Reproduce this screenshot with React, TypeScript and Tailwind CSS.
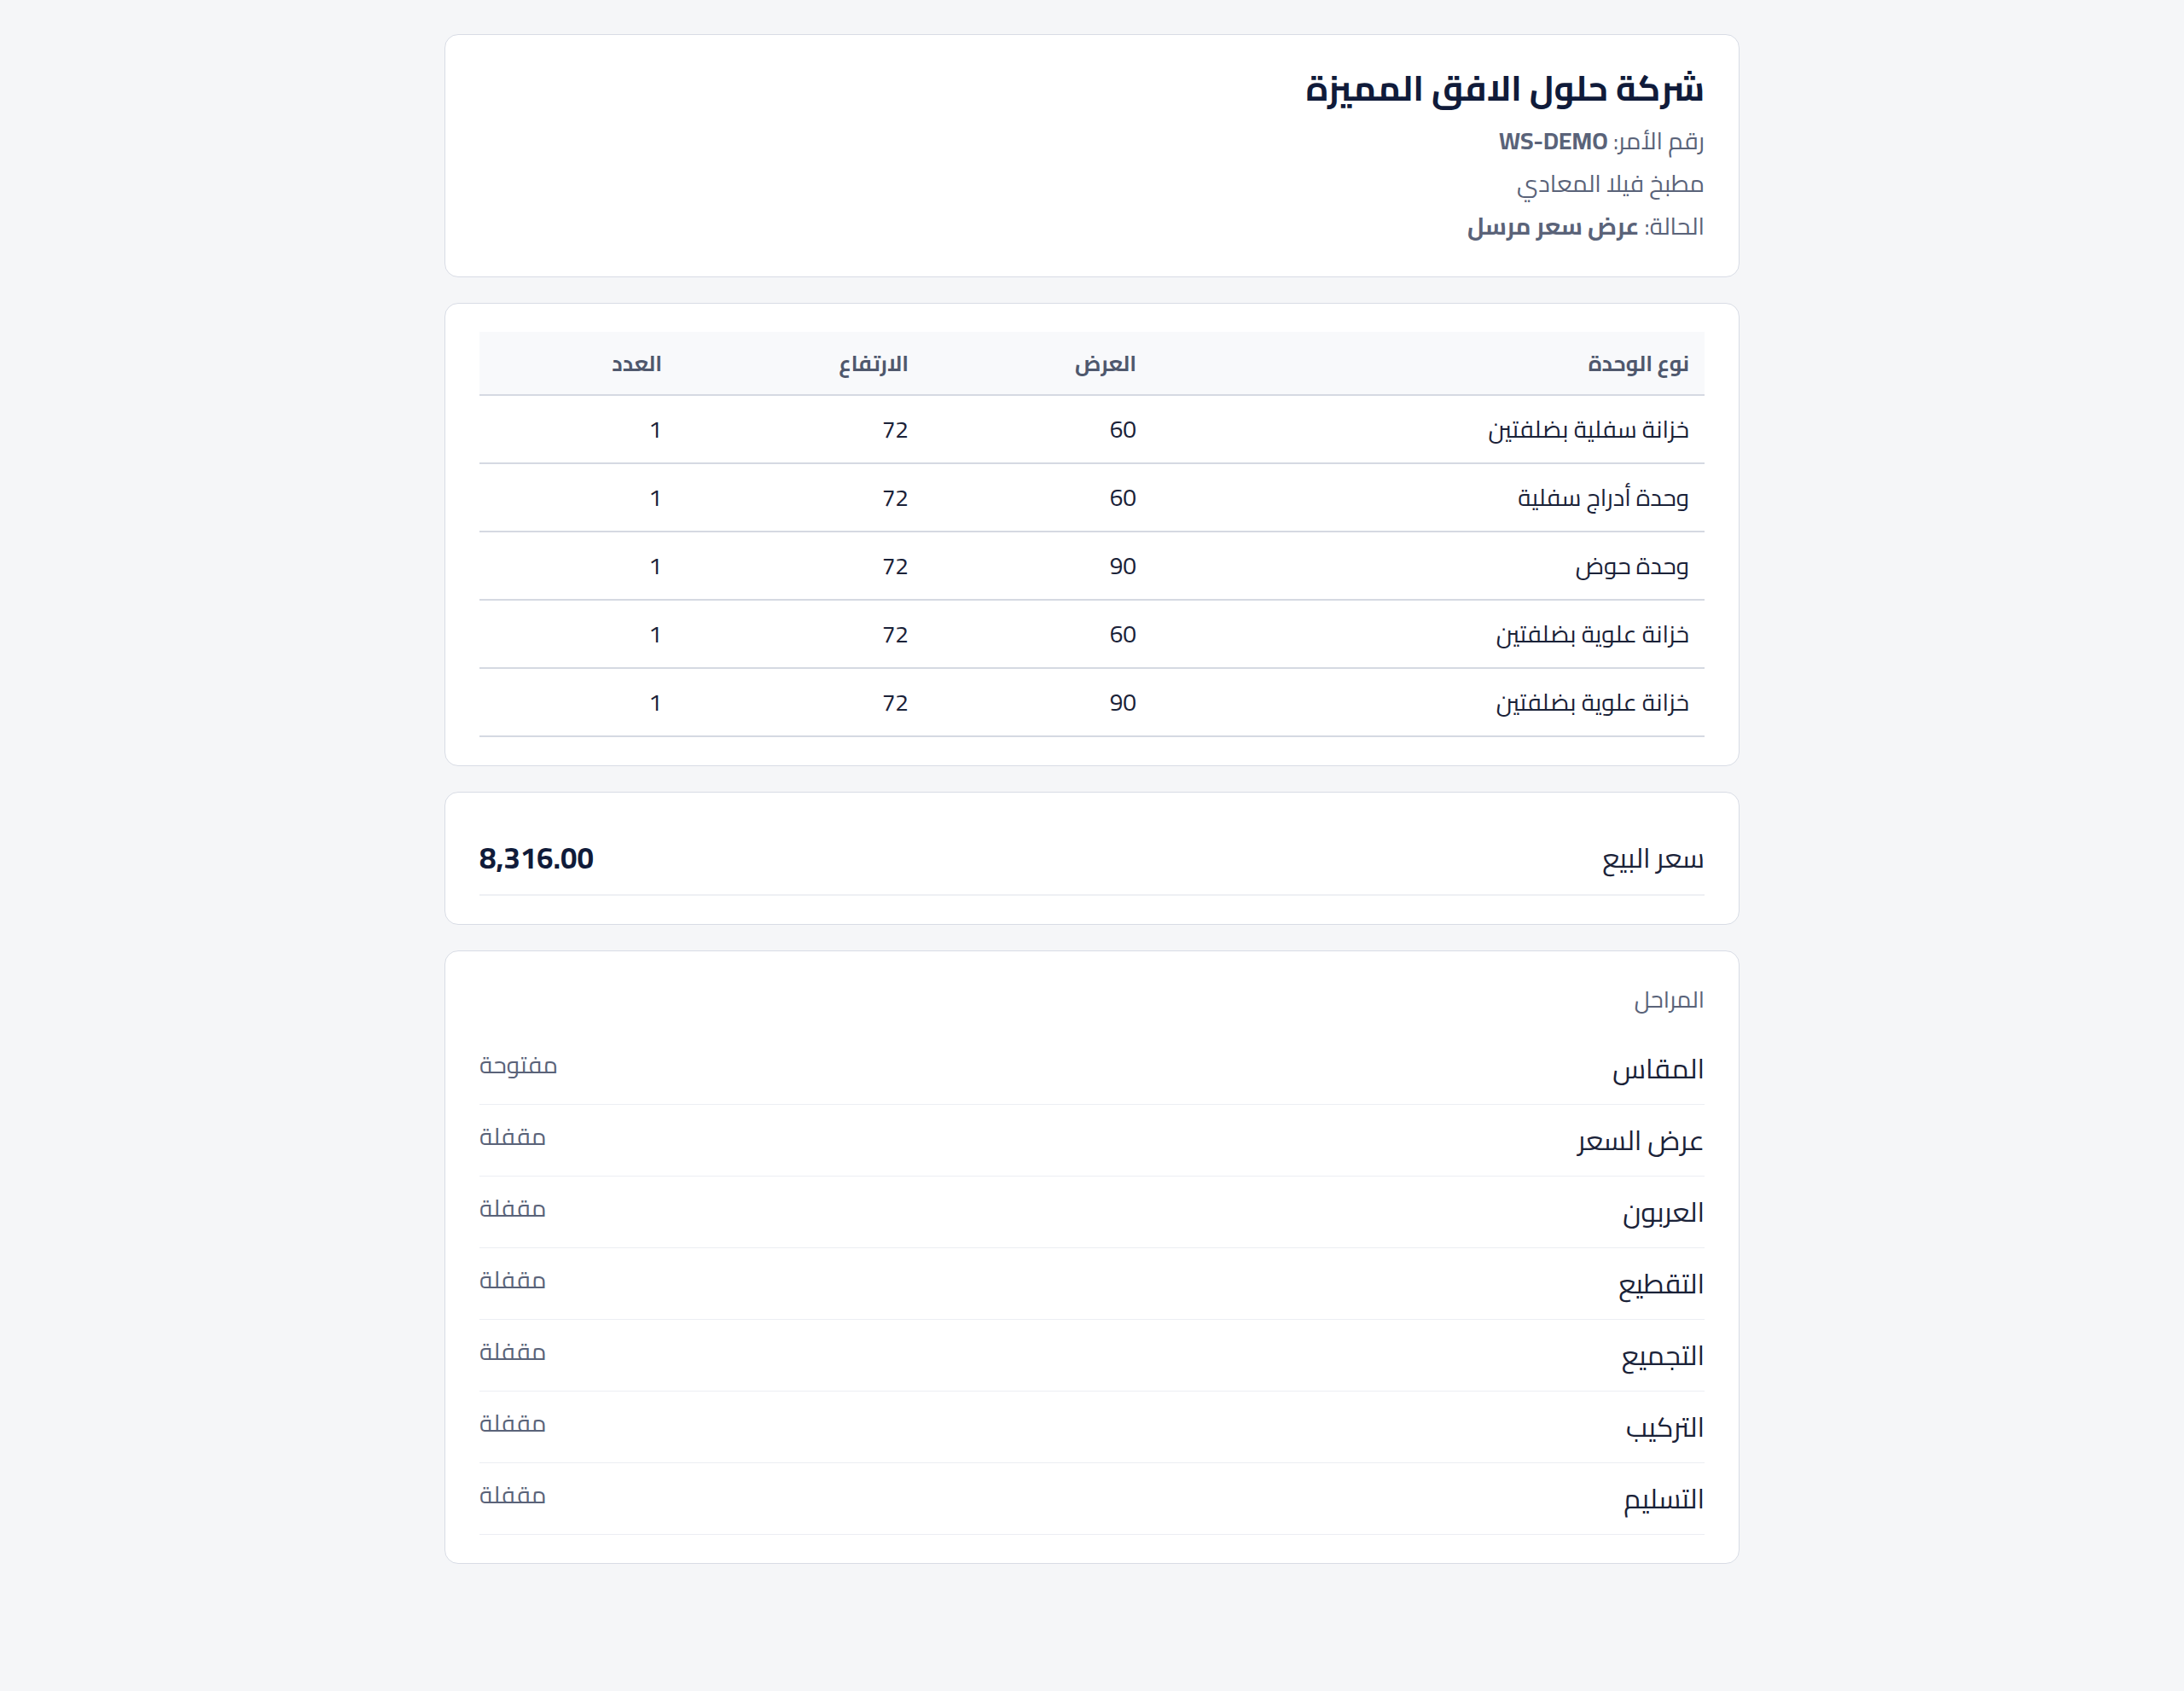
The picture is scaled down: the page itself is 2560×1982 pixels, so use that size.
import React from 'react';

const units = [
  { name: 'خزانة سفلية بضلفتين', width: 60, height: 72, qty: 1 },
  { name: 'وحدة أدراج سفلية', width: 60, height: 72, qty: 1 },
  { name: 'وحدة حوض', width: 90, height: 72, qty: 1 },
  { name: 'خزانة علوية بضلفتين', width: 60, height: 72, qty: 1 },
  { name: 'خزانة علوية بضلفتين', width: 90, height: 72, qty: 1 },
];

const stages = [
  { name: 'المقاس', status: 'مفتوحة' },
  { name: 'عرض السعر', status: 'مقفلة' },
  { name: 'العربون', status: 'مقفلة' },
  { name: 'التقطيع', status: 'مقفلة' },
  { name: 'التجميع', status: 'مقفلة' },
  { name: 'التركيب', status: 'مقفلة' },
  { name: 'التسليم', status: 'مقفلة' },
];

export default function App() {
  return (
    <div
      dir="rtl"
      className="min-h-screen bg-[#f5f6f8] pt-10 pb-10 text-[#1a2238]"
      style={{ fontFamily: "Cairo, 'Noto Sans Arabic', 'DejaVu Sans', sans-serif" }}
    >
      <div className="mx-auto flex w-[1518px] flex-col gap-[30px]">
        {/* Header */}
        <section className="rounded-2xl border border-[#d8dce5] bg-white px-10 pt-[33px] pb-[34px]">
          <h1 className="text-[41px] font-bold leading-[58px] text-[#101b3a]">شركة حلول الافق المميزة</h1>
          <div className="mt-[8px] text-[28px] leading-[50px] text-[#5a6379]">
            <p>
              رقم الأمر: <span className="font-bold">WS-DEMO</span>
            </p>
            <p>مطبخ فيلا المعادي</p>
            <p>
              الحالة: <span className="font-bold">عرض سعر مرسل</span>
            </p>
          </div>
        </section>

        {/* Units */}
        <section className="rounded-2xl border border-[#d8dce5] bg-white px-10 py-[33px]">
          <table className="w-full border-collapse text-right">
            <thead>
              <tr className="bg-[#f8f9fb] text-[25px] text-[#4f586d]">
                <th className="h-[74px] w-[648px] border-b-2 border-[#d5d9e2] px-[18px] font-bold">نوع الوحدة</th>
                <th className="h-[74px] w-[267px] border-b-2 border-[#d5d9e2] px-[18px] font-bold">العرض</th>
                <th className="h-[74px] w-[289px] border-b-2 border-[#d5d9e2] px-[18px] font-bold">الارتفاع</th>
                <th className="h-[74px] border-b-2 border-[#d5d9e2] px-[18px] font-bold">العدد</th>
              </tr>
            </thead>
            <tbody className="text-[28px] text-[#1a2238]">
              {units.map((u, i) => (
                <tr key={i}>
                  <td className="h-[80px] border-b-2 border-[#d5d9e2] px-[18px]">{u.name}</td>
                  <td className="h-[80px] border-b-2 border-[#d5d9e2] px-[18px]">{u.width}</td>
                  <td className="h-[80px] border-b-2 border-[#d5d9e2] px-[18px]">{u.height}</td>
                  <td className="h-[80px] border-b-2 border-[#d5d9e2] px-[18px]">{u.qty}</td>
                </tr>
              ))}
            </tbody>
          </table>
        </section>

        {/* Price */}
        <section className="rounded-2xl border border-[#d8dce5] bg-white px-10 py-[33px]">
          <div className="flex items-center justify-between border-b-2 border-[#eef0f4] py-5">
            <span className="text-[32px] leading-[46px] text-[#1a2238]">سعر البيع</span>
            <span className="text-[35px] font-bold leading-[46px] text-[#101b3a]">8,316.00</span>
          </div>
        </section>

        {/* Stages */}
        <section className="rounded-2xl border border-[#d8dce5] bg-white px-10 py-[33px]">
          <div className="mb-[17px] text-[27px] leading-[46px] text-[#5a6379]">المراحل</div>
          {stages.map((s) => (
            <div key={s.name} className="flex items-start justify-between border-b border-[#eceef3] py-4">
              <span className="text-[32px] leading-[51px] text-[#1a2238]">{s.name}</span>
              <span className="text-[28px] leading-[42px] text-[#5a6379]">{s.status}</span>
            </div>
          ))}
        </section>
      </div>
    </div>
  );
}
